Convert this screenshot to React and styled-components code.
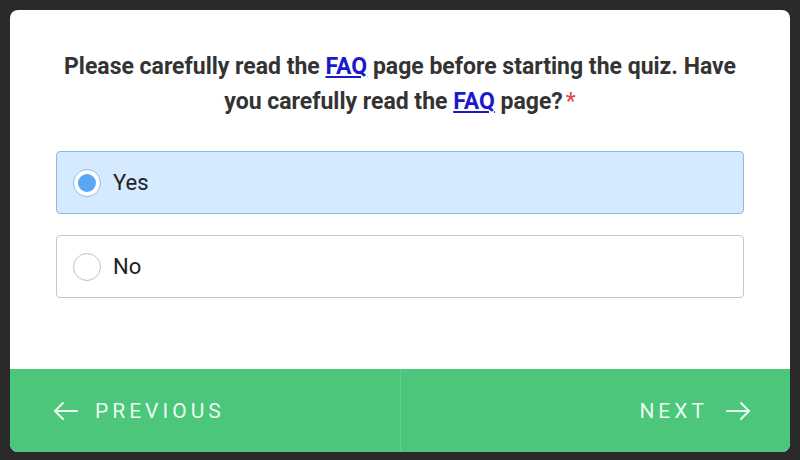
import React, { useState } from 'react';
import styled, { createGlobalStyle } from 'styled-components';

const Global = createGlobalStyle`
  html, body {
    margin: 0;
    padding: 0;
    background: #2a2a2b;
    font-family: Roboto, "Liberation Sans", sans-serif;
  }
`

const Page = styled.div`
  width: 800px;
  height: 460px;
  padding: 10px;
  box-sizing: border-box;
`

const Card = styled.div`
  width: 780px;
  height: 442px;
  background: #ffffff;
  border-radius: 8px;
  overflow: hidden;
  display: flex;
  flex-direction: column;
`

const Body = styled.div`
  flex: 1;
  padding: 39px 46px 0 46px;
`

const Question = styled.p`
  margin: 0 0 32px 0;
  text-align: center;
  font-size: 23px;
  line-height: 35px;
  font-weight: bold;
  color: #333333;
  padding: 0 4px;
`

const Link = styled.a`
  color: #1a1acc;
  text-decoration: underline;
  text-underline-offset: 2px;
`

const Star = styled.span`
  color: #e04848;
  font-weight: normal;
  margin-left: 3px;
`

const Options = styled.div`
  display: flex;
  flex-direction: column;
  gap: 21px;
`

const Option = styled.label`
  display: flex;
  align-items: center;
  height: 63px;
  box-sizing: border-box;
  padding-left: 16px;
  border-radius: 4px;
  border: 1.5px solid ${props => props.selected ? '#86bbe8' : '#c4c4cc'};
  background: ${props => props.selected ? '#d5e9ff' : '#ffffff'};
  cursor: pointer;
`

const Radio = styled.span`
  width: 28px;
  height: 28px;
  box-sizing: border-box;
  border-radius: 50%;
  border: 1.5px solid ${props => props.selected ? '#8cc0ee' : '#c0c0c6'};
  background: #ffffff;
  display: flex;
  align-items: center;
  justify-content: center;
  &::after {
    content: '';
    width: 18px;
    height: 18px;
    border-radius: 50%;
    background: #5aa6f4;
    display: ${props => props.selected ? 'block' : 'none'};
  }
`

const OptionText = styled.span`
  margin-left: 12px;
  font-size: 22px;
  color: #222222;
`

const Footer = styled.div`
  height: 83px;
  display: grid;
  grid-template-columns: 1fr 1fr;
  background: #4bc67a;
`

const NavButton = styled.button`
  border: none;
  background: transparent;
  display: flex;
  align-items: center;
  justify-content: ${props => props.right ? 'flex-end' : 'flex-start'};
  padding: ${props => props.right ? '0 38px 0 0' : '0 0 0 42px'};
  border-left: ${props => props.right ? '1px solid #5fcf8b' : 'none'};
  color: #eafaf0;
  font-family: Roboto, "Liberation Sans", sans-serif;
  font-size: 21px;
  letter-spacing: 4px;
  gap: ${props => props.right ? '16px' : '15px'};
  cursor: pointer;
`

const Arrow = ({ dir }) => (
  <svg width="28" height="20" viewBox="0 0 28 20" fill="none" stroke="#eafaf0" strokeWidth="2" strokeLinecap="round" strokeLinejoin="round">
    {dir === 'left'
      ? <><path d="M3 10 H25" /><path d="M11 2 L3 10 L11 18" /></>
      : <><path d="M3 10 H25" /><path d="M17 2 L25 10 L17 18" /></>}
  </svg>
)

export default function App() {
  const [answer, setAnswer] = useState('yes');
  return (
    <Page>
      <Global />
      <Card>
        <Body>
          <Question>
            Please carefully read the <Link href="#">FAQ</Link> page before starting the quiz. Have you carefully read the <Link href="#">FAQ</Link> page?<Star>*</Star>
          </Question>
          <Options>
            <Option selected={answer === 'yes'} onClick={() => setAnswer('yes')}>
              <Radio selected={answer === 'yes'} />
              <OptionText>Yes</OptionText>
            </Option>
            <Option selected={answer === 'no'} onClick={() => setAnswer('no')}>
              <Radio selected={answer === 'no'} />
              <OptionText>No</OptionText>
            </Option>
          </Options>
        </Body>
        <Footer>
          <NavButton type="button">
            <Arrow dir="left" />
            PREVIOUS
          </NavButton>
          <NavButton type="button" right>
            NEXT
            <Arrow dir="right" />
          </NavButton>
        </Footer>
      </Card>
    </Page>
  );
}
